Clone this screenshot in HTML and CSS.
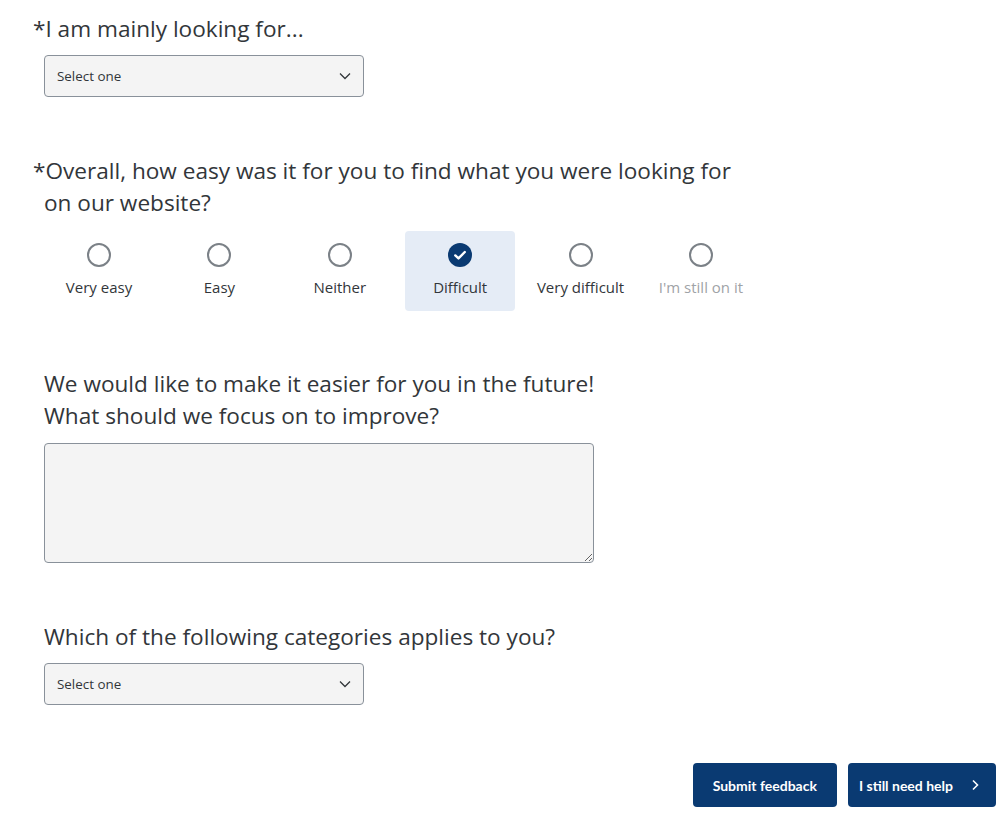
FILE: index.html
```html
<!DOCTYPE html>
<html lang="en">

<head>
  <meta charset="UTF-8">
  <meta name="viewport" content="width=device-width, initial-scale=1.0">
  <title>Feedback</title>
  <link rel="stylesheet" href="styles.css">
</head>

<body>

  <form class="feedbackForm">

    <div class="question">
      <label class="questionText required" for="lookingFor">*I am mainly looking for...</label>
      <div class="selectBox">
        <select id="lookingFor" class="select">
          <option>Select one</option>
        </select>
        <svg class="chevron" viewBox="0 0 12 8" width="12" height="8"><path d="M1 1.5 L6 6.5 L11 1.5" fill="none" stroke="#32363a" stroke-width="1.3"/></svg>
      </div>
    </div>

    <div class="question">
      <div class="questionText required">*Overall, how easy was it for you to find what you were looking for on our website?</div>
      <div class="ratingRow">
        <label class="ratingItem">
          <span class="radio"></span>
          <span class="ratingLabel">Very easy</span>
        </label>
        <label class="ratingItem">
          <span class="radio"></span>
          <span class="ratingLabel">Easy</span>
        </label>
        <label class="ratingItem">
          <span class="radio"></span>
          <span class="ratingLabel">Neither</span>
        </label>
        <label class="ratingItem selected">
          <span class="radio checked">
            <svg viewBox="0 0 24 24" width="24" height="24"><circle cx="12" cy="12" r="12" fill="#0a3a72"/><path d="M7.3 12.4 L10.5 15.4 L16.8 9" fill="none" stroke="#fff" stroke-width="2.4" stroke-linecap="round" stroke-linejoin="round"/></svg>
          </span>
          <span class="ratingLabel">Difficult</span>
        </label>
        <label class="ratingItem">
          <span class="radio"></span>
          <span class="ratingLabel">Very difficult</span>
        </label>
        <label class="ratingItem">
          <span class="radio"></span>
          <span class="ratingLabel muted">I'm still on it</span>
        </label>
      </div>
    </div>

    <div class="question">
      <label class="questionText" for="improve">We would like to make it easier for you in the future!<br>What should we focus on to improve?</label>
      <textarea id="improve" class="textArea"></textarea>
    </div>

    <div class="question">
      <label class="questionText" for="category">Which of the following categories applies to you?</label>
      <div class="selectBox">
        <select id="category" class="select">
          <option>Select one</option>
        </select>
        <svg class="chevron" viewBox="0 0 12 8" width="12" height="8"><path d="M1 1.5 L6 6.5 L11 1.5" fill="none" stroke="#32363a" stroke-width="1.3"/></svg>
      </div>
    </div>

    <div class="buttonRow">
      <button type="submit" class="btn">Submit feedback</button>
      <button type="button" class="btn btnHelp">I still need help
        <svg viewBox="0 0 8 12" width="8" height="12"><path d="M2 1.5 L6.5 6 L2 10.5" fill="none" stroke="#fff" stroke-width="1.6"/></svg>
      </button>
    </div>

  </form>

</body>

</html>
```

FILE: styles.css
```css
body {
  margin: 0;
  font-family: "Open Sans", "Noto Sans", Arial, sans-serif;
  color: #32363a;
  background: #fff;
}

.feedbackForm {
  display: flex;
  flex-direction: column;
  padding: 13px 9px 0 44px;
}

.questionText {
  display: block;
  font-size: 22.6px;
  line-height: 32px;
  max-width: 720px;
}

/* asterisk hangs out to the left */
.required {
  text-indent: -11px;
}

.selectBox {
  position: relative;
  width: 320px;
  margin-top: 10px;
}

.select {
  appearance: none;
  width: 320px;
  height: 42px;
  padding: 0 12px;
  font-family: inherit;
  font-size: 13.4px;
  color: #32363a;
  background: #f4f4f4;
  border: 1px solid #89919a;
  border-radius: 4px;
}

.chevron {
  position: absolute;
  right: 13px;
  top: 17px;
  pointer-events: none;
}

.question:nth-child(2) {
  margin-top: 58px;
}

.ratingRow {
  display: flex;
  gap: 10.4px;
  margin-top: 12px;
}

.ratingItem {
  width: 110px;
  height: 80px;
  display: flex;
  flex-direction: column;
  align-items: center;
  border-radius: 4px;
  font-size: 15px;
}

.ratingItem.selected {
  background: #e5ecf6;
}

.radio {
  width: 24px;
  height: 24px;
  margin-top: 12px;
  box-sizing: border-box;
  border: 2px solid #7b8187;
  border-radius: 50%;
}

.radio.checked {
  border: none;
}

.ratingLabel {
  margin-top: 10px;
  line-height: 20px;
  white-space: nowrap;
}

.muted {
  color: #9fa3a7;
}

.question:nth-child(3) {
  margin-top: 57px;
}

.textArea {
  display: block;
  width: 550px;
  height: 120px;
  margin-top: 11px;
  box-sizing: border-box;
  background: #f4f4f4;
  border: 1px solid #89919a;
  border-radius: 4px;
}

.question:nth-child(4) {
  margin-top: 58px;
}

.buttonRow {
  display: flex;
  justify-content: flex-end;
  gap: 11px;
  margin-top: 58px;
}

.btn {
  height: 44px;
  padding: 0 20px;
  font-family: Lato, "Open Sans", sans-serif;
  font-size: 14px;
  font-weight: 700;
  color: #fff;
  background: #0a3a72;
  border: none;
  border-radius: 4px;
}

.btnHelp {
  display: flex;
  align-items: center;
  gap: 18px;
  padding: 0 17px 0 11px;
}
```
